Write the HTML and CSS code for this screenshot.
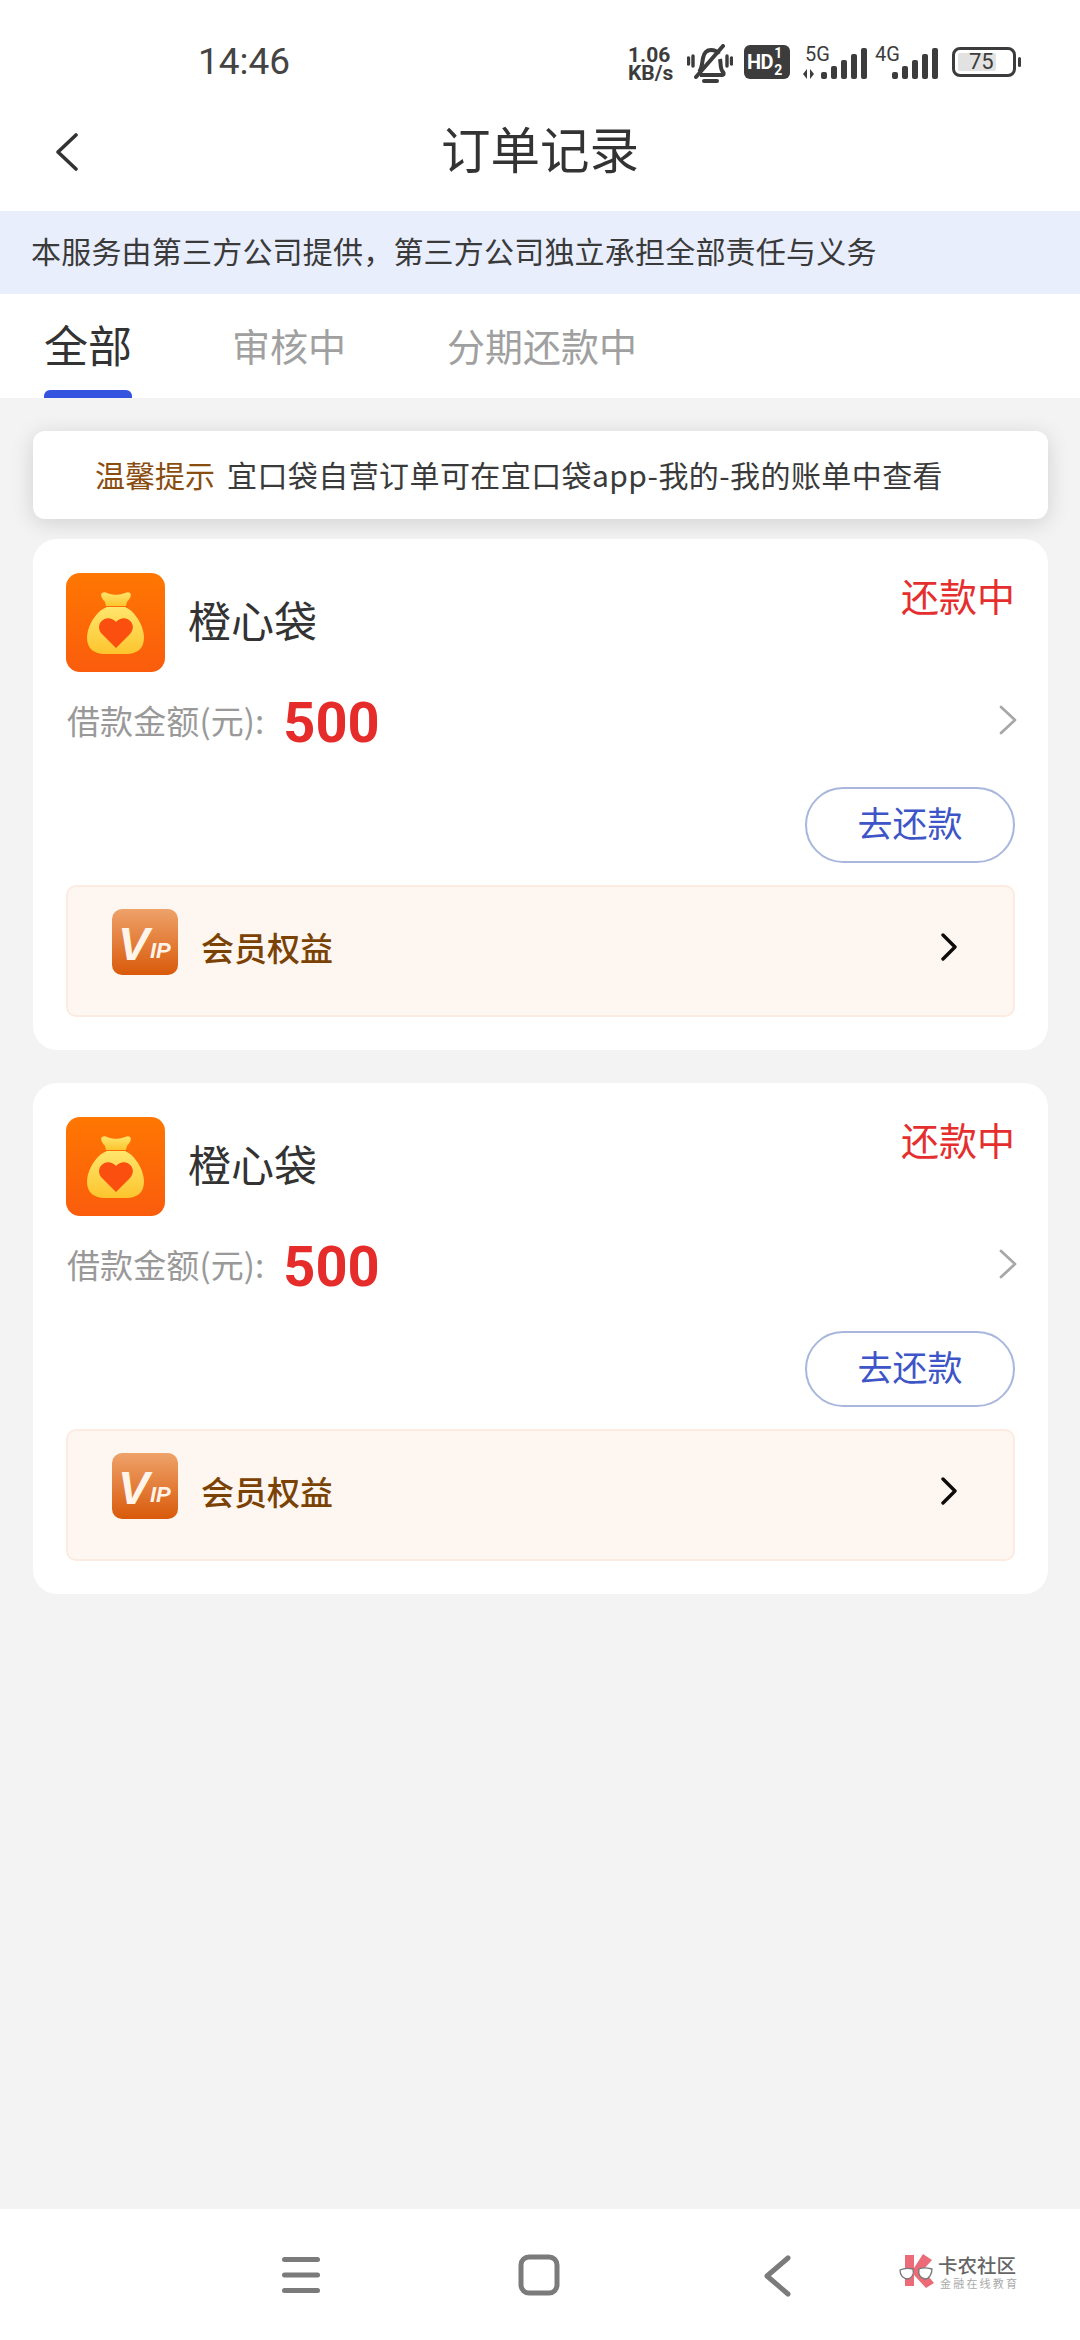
FILE: index.html
```html
<!DOCTYPE html>
<html lang="zh-CN">
<head>
<meta charset="utf-8">
<title>订单记录</title>
<link rel="stylesheet" href="styles.css">
</head>
<body>
<div class="page">
  <div class="top">
    <div class="status">
      <span class="time">14:46</span>
      <div class="sys">
        <div class="speed"><span>1.06</span><span>KB/s</span></div>
        <svg class="bell" width="46" height="40" viewBox="0 0 46 40" fill="none" stroke="#3c3c3c">
          <path d="M12 28c3-3 3-9 4-14 1-5 4-8 8-8 3 0 6 1 8 4M33 15c1 5 0 10 3 13 1 1 1 3-1 3H13" stroke-width="4" stroke-linejoin="round"/>
          <path d="M36 2 9 33" stroke-width="4" stroke-linecap="round"/>
          <path d="M17 37h13" stroke-width="4" stroke-linecap="round"/>
          <path d="M6 12v10M1.500 14v6M40 12v10M44.500 14v6" stroke-width="3.400" stroke-linecap="round"/>
        </svg>
        <div class="hd"><span class="hd-t">HD</span><span class="hd-n"><span>1</span><span>2</span></span></div>
        <svg class="sig5" width="66" height="38" viewBox="0 0 66 38">
          <text x="3" y="18" class="sig-t">5G</text>
          <path d="M5 26v10l-4-5zM8 26v10l4-5z" fill="#3c3c3c"/>
          <g fill="#3c3c3c"><rect x="19" y="29" width="6" height="7" rx="2"/><rect x="29" y="23" width="6" height="13" rx="2"/><rect x="39" y="17" width="6" height="19" rx="2"/><rect x="49" y="11" width="6" height="25" rx="2"/><rect x="59" y="5" width="6" height="31" rx="2"/></g>
        </svg>
        <svg class="sig4" width="64" height="38" viewBox="0 0 64 38">
          <text x="1" y="18" class="sig-t">4G</text>
          <g fill="#3c3c3c"><rect x="18" y="29" width="6" height="7" rx="2"/><rect x="28" y="23" width="6" height="13" rx="2"/><rect x="38" y="17" width="6" height="19" rx="2"/><rect x="48" y="11" width="6" height="25" rx="2"/><rect x="58" y="5" width="6" height="31" rx="2"/></g>
        </svg>
        <div class="batt"><div class="batt-body"><div class="batt-fill"></div><span class="batt-n">75</span></div><div class="batt-nub"></div></div>
      </div>
    </div>
    <div class="bar">
      <svg class="back" width="24" height="38" viewBox="0 0 24 38" fill="none"><path d="M21 2 3 19l18 17" stroke="#333" stroke-width="3.600" stroke-linecap="round" stroke-linejoin="round"/></svg>
      <h1 class="title">订单记录</h1>
    </div>
  </div>

  <div class="banner">本服务由第三方公司提供，第三方公司独立承担全部责任与义务</div>

  <div class="tabs">
    <div class="tab active">全部</div>
    <div class="tab t2">审核中</div>
    <div class="tab t3">分期还款中</div>
  </div>

  <main class="content">
    <div class="notice"><span class="notice-k">温馨提示</span><span class="notice-v">宜口袋自营订单可在宜口袋app-我的-我的账单中查看</span></div>

    <section class="card">
      <div class="head">
        <svg class="logo" width="99" height="99" viewBox="0 0 99 99">
          <defs>
            <linearGradient id="bg1" x1="0" y1="0" x2="0" y2="1"><stop offset="0" stop-color="#ff7702"/><stop offset="1" stop-color="#fa5c0c"/></linearGradient>
            <linearGradient id="bag1" x1="0" y1="0" x2="0" y2="1"><stop offset="0" stop-color="#ffe56c"/><stop offset="1" stop-color="#fdc52e"/></linearGradient>
          </defs>
          <rect width="99" height="99" rx="14" fill="url(#bg1)"/>
          <path d="M36 20c3-2 5 0 8 1 3 1 9 1 12 0 3-1 6-3 8-1 2 2 0 6-3 9l-1 4H40l-1-4c-3-3-5-7-3-9z" fill="url(#bag1)"/>
          <path d="M41 34h18c10 4 19 19 19 31 0 11-8 16-17 16H38c-9 0-17-5-17-16 0-12 9-27 20-31z" fill="url(#bag1)"/>
          <path d="M50 75 36 61c-9-10 5-22 14-12 9-10 23 2 14 12z" fill="#fa4f0e"/>
        </svg>
        <div class="name">橙心袋</div>
        <div class="state">还款中</div>
      </div>
      <div class="amount">
        <span class="amount-l">借款金额(元):</span>
        <span class="amount-v">500</span>
        <svg class="more" width="20" height="30" viewBox="0 0 20 30" fill="none"><path d="M3 2l14 13L3 28" stroke="#a8a8a8" stroke-width="2.800" stroke-linecap="round" stroke-linejoin="round"/></svg>
      </div>
      <div class="actions"><div class="pay">去还款</div></div>
      <div class="vip">
        <svg class="vip-i" width="66" height="66" viewBox="0 0 66 66">
          <defs><linearGradient id="vg1" x1="0" y1="0" x2="0" y2="1"><stop offset="0" stop-color="#eea26a"/><stop offset="1" stop-color="#d95a0a"/></linearGradient></defs>
          <rect width="66" height="66" rx="10" fill="url(#vg1)"/>
          <text x="6" y="51" class="vip-v">V</text>
          <text x="38" y="49" class="vip-p">IP</text>
        </svg>
        <span class="vip-t">会员权益</span>
        <svg class="vip-m" width="18" height="28" viewBox="0 0 18 28" fill="none"><path d="M3 2l12 12L3 26" stroke="#0c0c0c" stroke-width="3.400" stroke-linecap="round" stroke-linejoin="round"/></svg>
      </div>
    </section>

    <section class="card">
      <div class="head">
        <svg class="logo" width="99" height="99" viewBox="0 0 99 99">
          <rect width="99" height="99" rx="14" fill="url(#bg1)"/>
          <path d="M36 20c3-2 5 0 8 1 3 1 9 1 12 0 3-1 6-3 8-1 2 2 0 6-3 9l-1 4H40l-1-4c-3-3-5-7-3-9z" fill="url(#bag1)"/>
          <path d="M41 34h18c10 4 19 19 19 31 0 11-8 16-17 16H38c-9 0-17-5-17-16 0-12 9-27 20-31z" fill="url(#bag1)"/>
          <path d="M50 75 36 61c-9-10 5-22 14-12 9-10 23 2 14 12z" fill="#fa4f0e"/>
        </svg>
        <div class="name">橙心袋</div>
        <div class="state">还款中</div>
      </div>
      <div class="amount">
        <span class="amount-l">借款金额(元):</span>
        <span class="amount-v">500</span>
        <svg class="more" width="20" height="30" viewBox="0 0 20 30" fill="none"><path d="M3 2l14 13L3 28" stroke="#a8a8a8" stroke-width="2.800" stroke-linecap="round" stroke-linejoin="round"/></svg>
      </div>
      <div class="actions"><div class="pay">去还款</div></div>
      <div class="vip">
        <svg class="vip-i" width="66" height="66" viewBox="0 0 66 66">
          <rect width="66" height="66" rx="10" fill="url(#vg1)"/>
          <text x="6" y="51" class="vip-v">V</text>
          <text x="38" y="49" class="vip-p">IP</text>
        </svg>
        <span class="vip-t">会员权益</span>
        <svg class="vip-m" width="18" height="28" viewBox="0 0 18 28" fill="none"><path d="M3 2l12 12L3 26" stroke="#0c0c0c" stroke-width="3.400" stroke-linecap="round" stroke-linejoin="round"/></svg>
      </div>
    </section>
  </main>

  <nav class="nav">
    <svg class="nav-menu" width="40" height="36" viewBox="0 0 40 36" fill="#7b7b7b"><rect x="1" y="0" width="38" height="5" rx="2.500"/><rect x="1" y="15.500" width="38" height="5" rx="2.500"/><rect x="1" y="31" width="38" height="5" rx="2.500"/></svg>
    <svg class="nav-home" width="42" height="42" viewBox="0 0 42 42" fill="none"><rect x="3" y="3" width="36" height="36" rx="8" stroke="#7b7b7b" stroke-width="5"/></svg>
    <svg class="nav-back" width="28" height="42" viewBox="0 0 28 42" fill="none"><path d="M25 3 4 21l21 18" stroke="#7b7b7b" stroke-width="5" stroke-linecap="round" stroke-linejoin="round"/></svg>
    <div class="mark">
      <svg class="mark-i" width="36" height="36" viewBox="0 0 36 36">
        <path d="M6 2h9v13L24 1l9 6-9 10 11 13-8 5-12-13v11H6z" fill="#ec6b78"/>
        <path d="M1 17c4-2 9-2 13-1 1 5-1 9-5 10-5 0-8-4-8-9zM20 16c4-2 9-1 13 0 0 5-3 10-7 10-5-1-7-5-6-10z" fill="#fff" stroke="#777" stroke-width="1.300"/>
      </svg>
      <div class="mark-t"><span class="mark-a">卡农社区</span><span class="mark-b">金融在线教育</span></div>
    </div>
  </nav>
</div>
</body>
</html>
```

FILE: styles.css
```css
* { box-sizing: border-box; }
html, body { margin: 0; padding: 0; }
body {
  width: 1080px;
  height: 2340px;
  overflow: hidden;
  background: #f3f3f3;
  font-family: "Noto Sans CJK SC", "Noto Sans", sans-serif;
  color: #333;
}
.page { display: flex; flex-direction: column; height: 2340px; }

.top { background: #fff; height: 211px; flex: none; }
.status {
  height: 92px;
  padding: 44px 0 0 198px;
  display: flex;
  justify-content: space-between;
  align-items: flex-start;
}
.time { font: 400 37px/36px Roboto, sans-serif; color: #444; }
.sys { display: flex; align-items: flex-start; margin-right: 59px; }
.speed {
  display: flex; flex-direction: column; width: 50px;
  font: 700 21px/18px Roboto, sans-serif; color: #3c3c3c; margin-top: 2px;
}
.bell { margin-left: 9px; }
.hd {
  width: 46px; height: 34px; margin-left: 11px; margin-top: 1px;
  background: #3c3c3c; border-radius: 6px; color: #fff;
  display: flex; align-items: center; padding-left: 3px;
  font-family: Roboto, sans-serif; font-weight: 700;
}
.hd-t { font-size: 20px; line-height: 1; letter-spacing: -0.5px; }
.hd-n { display: flex; flex-direction: column; font-size: 14px; line-height: 17px; margin-left: 1px; }
.sig5 { margin-left: 12px; margin-top: -1px; }
.sig4 { margin-left: 6px; margin-top: -1px; }
.sig-t { font: 400 20px Roboto, sans-serif; fill: #3c3c3c; }
.batt { display: flex; align-items: center; margin-left: 14px; margin-top: 3px; }
.batt-body {
  width: 64px; height: 30px; border: 3px solid #3c3c3c; border-radius: 8px;
  position: relative; padding: 3px;
}
.batt-fill { width: 38px; height: 18px; background: #e2e2e2; border-radius: 2px; }
.batt-n {
  position: absolute; left: 14px; top: 0; font: 400 22px/24px Roboto, sans-serif; color: #3c3c3c;
}
.batt-nub { width: 3px; height: 10px; background: #3c3c3c; border-radius: 2px; margin-left: 2px; }

.bar { height: 119px; position: relative; display: flex; align-items: center; justify-content: center; }
.back { position: absolute; left: 55px; top: 41px; }
.title { margin: 0 0 8px; font-size: 49.500px; line-height: 60px; font-weight: 400; color: #333; }

.banner {
  height: 83px; flex: none; background: #e9eefc; padding: 0 0 6px 31px;
  display: flex; align-items: center;
  font-size: 30px; letter-spacing: 0.2px; color: #3a3a3a;
}
.tabs { height: 104px; flex: none; background: #fff; display: flex; padding-left: 44px; position: relative; align-items: flex-start; }
.tab { font-size: 38px; line-height: 50px; color: #a0a0a0; padding-top: 26px; box-sizing: content-box; }
.tab.active { font-size: 44px; line-height: 50px; color: #333; padding-top: 25px; height: 79px; width: 88px; position: relative; }
.tab.active::after {
  content: ""; position: absolute; left: 0; right: 0; bottom: 0; height: 8px;
  background: #3453e0; border-radius: 6px 6px 0 0;
}
.t2 { margin-left: 100px; }
.t3 { margin-left: 101px; }

.content { flex: 1; padding: 33px 32px 0 33px; display: flex; flex-direction: column; }
.notice {
  height: 88px; background: #fff; border-radius: 12px;
  box-shadow: 0 4px 22px rgba(0, 0, 0, 0.14);
  display: flex; align-items: center; padding: 0 0 2px 62px; font-size: 30px;
}
.notice-k { color: #8a4d10; }
.notice-v { margin-left: 12px; color: #3a3a3a; letter-spacing: 0.42px; }

.card {
  background: #fff; border-radius: 24px; height: 511px; margin-top: 20px;
  padding: 34px 33px 0;
  display: flex; flex-direction: column;
  position: relative;
}
.card + .card { margin-top: 33px; }
.head { display: flex; align-items: center; height: 99px; }
.logo { flex: none; }
.name { margin-left: 23px; font-size: 43px; line-height: 60px; color: #333; margin-top: -8px; }
.state { margin-left: auto; align-self: flex-start; font-size: 38px; line-height: 50px; color: #e52f2f; margin-top: -3px; }
.amount { display: flex; align-items: center; height: 60px; margin-top: 18px; }
.amount-l { font-size: 33px; letter-spacing: 0.1px; color: #999; margin-left: 1px; }
.amount-v { font: 700 56px/60px Roboto, sans-serif; color: #e62b2b; margin: 5px 0 0 19px; }
.more { margin-left: auto; margin-right: -3px; }
.actions { display: flex; justify-content: flex-end; margin-top: 37px; }
.pay {
  width: 210px; height: 76px; border: 2px solid #a9b7dc; border-radius: 38px; padding-bottom: 8px;
  display: flex; align-items: center; justify-content: center;
  font-size: 35px; color: #3e55c8;
}
.vip {
  height: 132px; margin-top: 22px; background: #fef6f0; border: 2px solid #fbebe1; border-radius: 10px;
  display: flex; align-items: flex-start; padding: 22px 55px 0 44px;
}
.vip-i { flex: none; }
.vip-v { font: italic 700 47px "Liberation Sans", sans-serif; fill: #fff4ea; }
.vip-p { font: italic 700 22px "Liberation Sans", sans-serif; fill: #fff4ea; }
.vip-t { margin-left: 23px; margin-top: 15px; font-size: 33px; line-height: 46px; font-weight: 500; color: #7a4204; }
.vip-m { margin-left: auto; margin-top: 24px; }

.nav { height: 131px; flex: none; background: #fff; display: flex; align-items: flex-start; padding: 44px 0 0 281px; position: relative; }
.nav-menu { margin-top: 4px; }
.nav-home { margin-left: 197px; margin-top: 1px; }
.nav-back { margin-left: 203px; margin-top: 2px; }
.mark { display: flex; margin-left: 108px; }
.mark-i { flex: none; }
.mark-t { display: flex; flex-direction: column; margin: 1px 0 0 3px; }
.mark-a { font-size: 19.500px; line-height: 22px; color: #666; font-weight: 500; white-space: nowrap; }
.mark-b { font-size: 11px; line-height: 14px; color: #aaa; letter-spacing: 2.200px; white-space: nowrap; margin-left: 2px; }
```
